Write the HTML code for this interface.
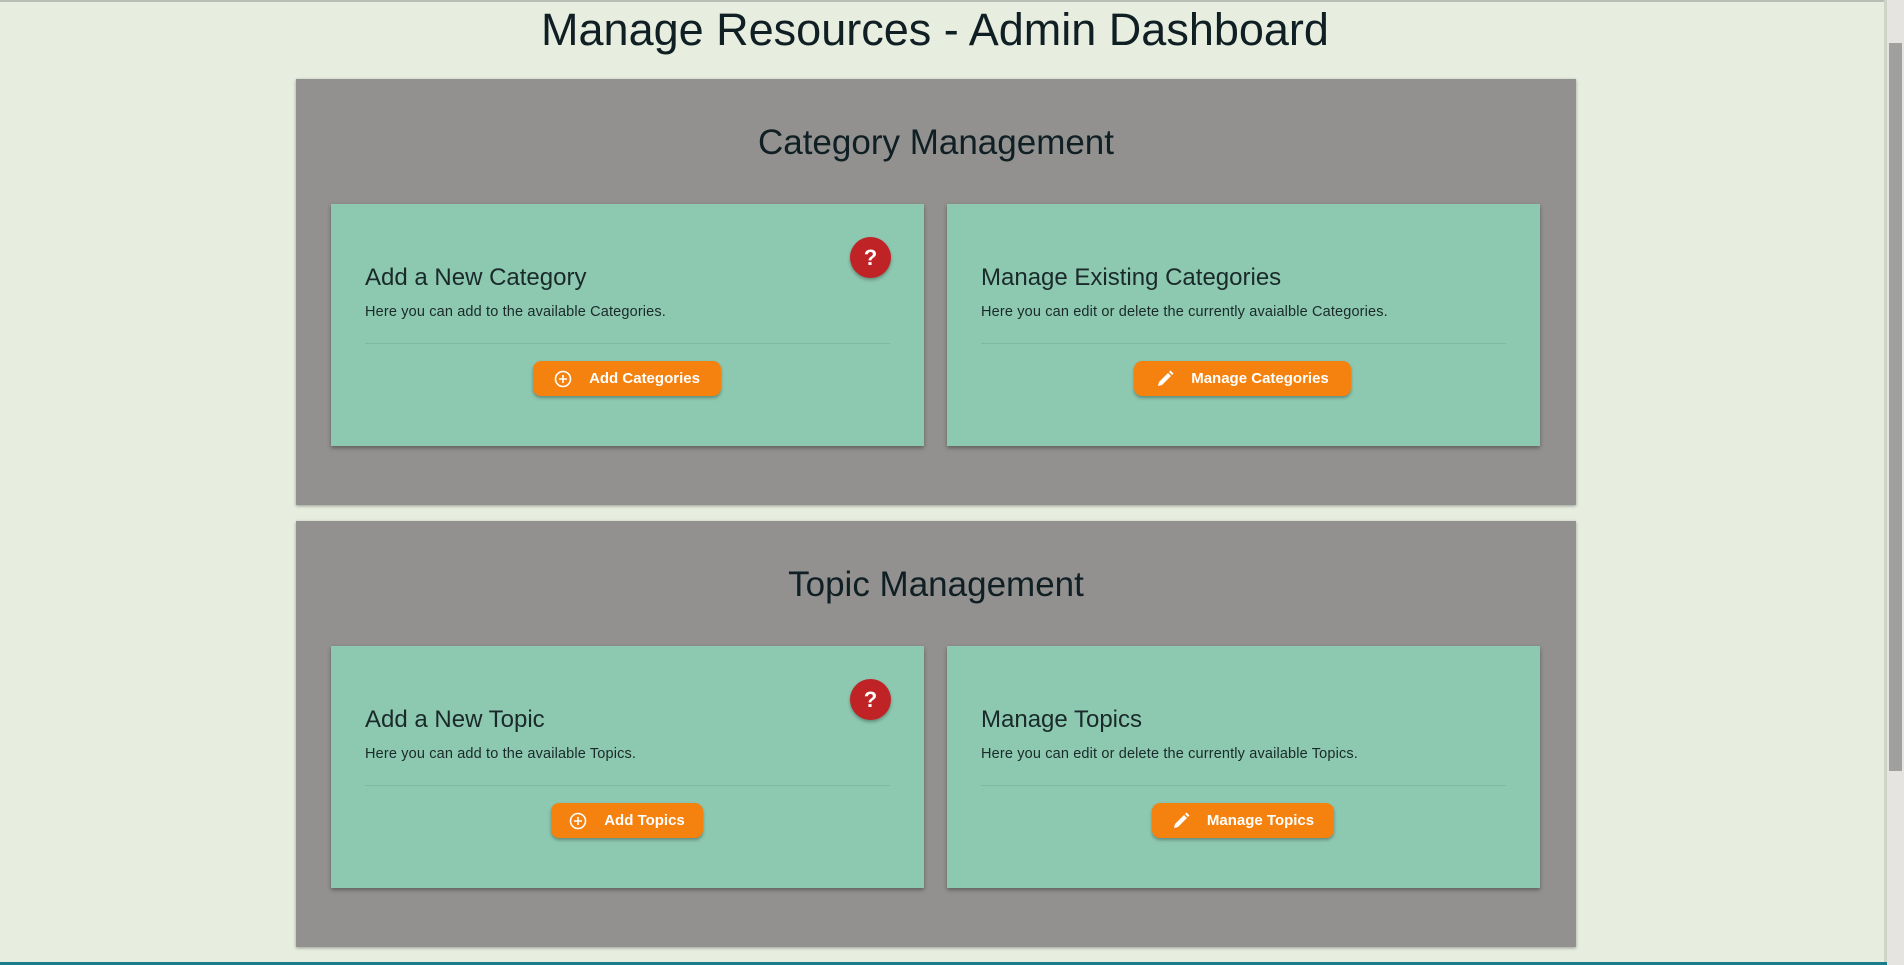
<!DOCTYPE html>
<html><head><meta charset="utf-8"><style>
*{margin:0;padding:0;box-sizing:border-box}
body{width:1904px;height:965px;background:#e7eddf;font-family:"Liberation Sans",sans-serif;color:#0f1f24;position:relative;overflow:hidden}
.abs{position:absolute}
.title{left:0;width:1870px;top:3px;text-align:center;font-size:45px;line-height:54px}
.panel{background:#92918f;box-shadow:0 1px 3px rgba(0,0,0,.35);left:296px;width:1280px}
.ph{left:0;width:100%;text-align:center;font-size:35px;line-height:40px}
.card{background:#8dc8b0;box-shadow:0 2px 4px rgba(0,0,0,.35);width:593px;height:242px;top:125px}
.ct{left:34px;top:59px;font-size:24px;line-height:30px;color:#1a2a2a}
.cd{left:34px;top:100px;font-size:14.5px;color:#1a2a2a;letter-spacing:0.15px}
.hr{left:34px;right:34px;top:139px;height:1px;background:#80b9a2}
.btn{top:157px;height:35px;background:#f5820f;border-radius:8px;color:#fff;font-weight:bold;font-size:15px;line-height:35px;box-shadow:0 2px 3px rgba(0,0,0,.3);white-space:nowrap;display:flex;align-items:center;justify-content:center;gap:17px}
.btn svg{flex:none}
.q{left:519px;top:33px;width:41px;height:41px;border-radius:50%;background:#c02326;color:#fff;font-weight:bold;font-size:22px;line-height:41px;text-align:center;box-shadow:0 2px 3px rgba(0,0,0,.3)}
</style></head><body>
<div class="abs" style="left:0;top:0;width:1887px;height:2px;background:#b9beb4"></div>
<div class="abs title">Manage Resources - Admin Dashboard</div>

<div class="abs panel" style="top:79px;height:426px">
 <div class="abs ph" style="top:44px">Category Management</div>
 <div class="abs card" style="left:35px">
  <div class="abs q">?</div>
  <div class="abs ct">Add a New Category</div>
  <div class="abs cd">Here you can add to the available Categories.</div>
  <div class="abs hr"></div>
  <div class="abs btn" style="left:202px;width:188px"><svg width="18" height="18" viewBox="0 0 18 18"><circle cx="9" cy="9" r="7.5" fill="none" stroke="#fff" stroke-width="1.6"/><path d="M9 5v8M5 9h8" stroke="#fff" stroke-width="1.6"/></svg><span>Add Categories</span></div>
 </div>
 <div class="abs card" style="left:651px">
  <div class="abs ct">Manage Existing Categories</div>
  <div class="abs cd">Here you can edit or delete the currently avaialble Categories.</div>
  <div class="abs hr"></div>
  <div class="abs btn" style="left:187px;width:217px"><svg width="18" height="18" viewBox="0 0 18 18"><path d="M2 16l1-4 9-9 3 3-9 9z M13 2l1.5-1.5 3 3L16 5z" fill="#fff"/></svg><span>Manage Categories</span></div>
 </div>
</div>

<div class="abs panel" style="top:521px;height:426px">
 <div class="abs ph" style="top:44px">Topic Management</div>
 <div class="abs card" style="left:35px">
  <div class="abs q">?</div>
  <div class="abs ct">Add a New Topic</div>
  <div class="abs cd">Here you can add to the available Topics.</div>
  <div class="abs hr"></div>
  <div class="abs btn" style="left:220px;width:152px"><svg width="18" height="18" viewBox="0 0 18 18"><circle cx="9" cy="9" r="7.5" fill="none" stroke="#fff" stroke-width="1.6"/><path d="M9 5v8M5 9h8" stroke="#fff" stroke-width="1.6"/></svg><span>Add Topics</span></div>
 </div>
 <div class="abs card" style="left:651px">
  <div class="abs ct">Manage Topics</div>
  <div class="abs cd">Here you can edit or delete the currently available Topics.</div>
  <div class="abs hr"></div>
  <div class="abs btn" style="left:205px;width:182px"><svg width="18" height="18" viewBox="0 0 18 18"><path d="M2 16l1-4 9-9 3 3-9 9z M13 2l1.5-1.5 3 3L16 5z" fill="#fff"/></svg><span>Manage Topics</span></div>
 </div>
</div>

<div class="abs" style="left:1884px;top:0;width:3px;height:965px;background:#cfd4c8"></div>
<div class="abs" style="left:1887px;top:0;width:17px;height:965px;background:#e6e4e1"></div>
<div class="abs" style="left:1889px;top:43px;width:13px;height:728px;background:#a0a09f"></div>
<div class="abs" style="left:0;top:962px;width:1887px;height:3px;background:#1c7c8c"></div>
</body></html>
